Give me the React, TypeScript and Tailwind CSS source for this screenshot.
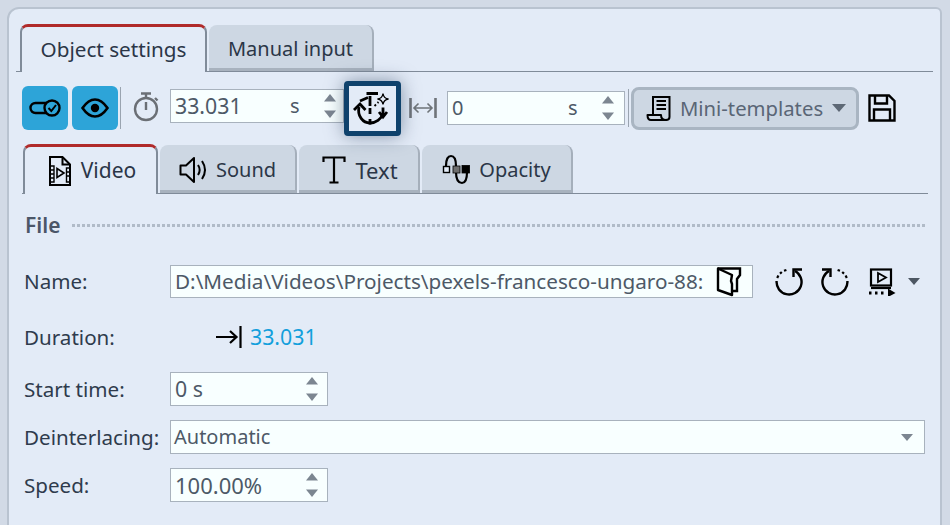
const font = "[font-family:'Noto_Sans','Open_Sans',sans-serif]";

function Spinner() {
  return (
    <svg width="14" height="26" viewBox="0 0 14 26" className="shrink-0">
      <path d="M7 1 L13 8.5 H1 Z" fill="#7c8691" />
      <path d="M1 17.5 H13 L7 25 Z" fill="#7c8691" />
    </svg>
  );
}

function Caret({ fill = "#5d6875", w = 14, h = 8 }: { fill?: string; w?: number; h?: number }) {
  return (
    <svg width={w} height={h} viewBox="0 0 14 8" preserveAspectRatio="none" className="shrink-0">
      <path d="M0 0 H14 L7 8 Z" fill={fill} />
    </svg>
  );
}

function ToggleIcon() {
  return (
    <svg width="32" height="20" viewBox="0 0 32 20" fill="none" stroke="#000" strokeWidth="2.4">
      <rect x="1.5" y="5" width="22" height="10" rx="5" />
      <circle cx="23" cy="10" r="7.5" fill="#2da4d8" />
      <path d="M19.5 10 L22.3 13 L27 7" strokeWidth="2" />
    </svg>
  );
}

function EyeIcon() {
  return (
    <svg width="28" height="20" viewBox="0 0 28 20" fill="none" stroke="#000" strokeWidth="2.6">
      <path d="M1.5 10 C6 3.5 10 1.5 14 1.5 C18 1.5 22 3.5 26.5 10 C22 16.5 18 18.5 14 18.5 C10 18.5 6 16.5 1.5 10 Z" />
      <circle cx="14" cy="10" r="4.2" fill="#000" stroke="none" />
    </svg>
  );
}

function TimerIcon() {
  return (
    <svg width="26" height="30" viewBox="0 0 26 30" fill="none" stroke="#6b6f75" strokeWidth="2.4" className="shrink-0">
      <circle cx="13" cy="17" r="11" />
      <path d="M8 1.5 H18 M13 2 V6 M13 10 V18 M22 6 L24.5 8.5" />
    </svg>
  );
}

function MagicTimerIcon() {
  return (
    <svg width="45" height="45" viewBox="0 0 45 45" fill="none" stroke="#000" strokeWidth="2.8">
      <path d="M9 21 C7 30 13 37 20 37 C26 37 31 33 33 28" />
      <path d="M4 24 L10 18 L15.5 24" />
      <path d="M20 33 V38.5" />
      <path d="M20 10 V20 M20 22 V28" />
      <path d="M16.5 7.5 H28 M10 15 L18 11.5" />
      <path d="M33 7.5 C33.5 11 35 12.5 38.5 13 C35 13.5 33.5 15 33 18.5 C32.5 15 31 13.5 27.5 13 C31 12.5 32.5 11 33 7.5 Z" strokeWidth="1.3" />
      <path d="M24.5 20 L26 18.5 M27.5 17 L28.5 16" strokeWidth="1.8" />
      <path d="M33 21.5 V31 M29 26 L33 31 L37 26" />
    </svg>
  );
}

function FitIcon() {
  return (
    <svg width="28" height="20" viewBox="0 0 28 20" fill="none" stroke="#6f7479" strokeWidth="2.6" className="shrink-0">
      <path d="M1.5 0 V20 M26.5 0 V20" />
      <path d="M5 10 H23 M9.5 5.5 L5 10 L9.5 14.5 M18.5 5.5 L23 10 L18.5 14.5" strokeWidth="1.6" />
    </svg>
  );
}

function ScrollIcon() {
  return (
    <svg width="25" height="26" viewBox="0 0 25 26" fill="none" stroke="#000" strokeWidth="2" className="shrink-0">
      <path d="M7 19 V2 H23.5 V22 C23.5 24 22 25 20 25" />
      <path d="M10.5 6 H20 M10.5 10 H20 M10.5 14 H20" strokeWidth="1.9" />
      <path d="M1.5 20 H15 C15 23 17 25 20 25 H5 C3 25 1.5 23 1.5 20 Z" strokeLinejoin="round" />
    </svg>
  );
}

function SaveIcon() {
  return (
    <svg width="28" height="28" viewBox="0 0 28 28" fill="none" stroke="#000" strokeWidth="2.4" className="shrink-0">
      <path d="M1.5 1.5 H21 L26.5 7 V26.5 H1.5 Z" />
      <path d="M7 2 V9.5 H19 V2 M6 26 V15.5 H22 V26" />
    </svg>
  );
}

function VideoFileIcon() {
  return (
    <svg width="22" height="30" viewBox="0 0 22 30" fill="none" stroke="#000" strokeWidth="2" className="shrink-0">
      <path d="M1 1 H13.5 L21 8.5 V29 H1 Z" />
      <path d="M13.5 1 V8.5 H21" />
      <path d="M8 12.5 L15 17 L8 21.5 Z" strokeWidth="1.6" />
      <path d="M1 10 H5 V26 H1 M1 14 H5 M1 18 H5 M1 22 H5 M21 12 H17.5 V26 H21 M21 16 H17.5 M21 20 H17.5" strokeWidth="1.4" />
    </svg>
  );
}

function SoundIcon() {
  return (
    <svg width="28" height="28" viewBox="0 0 28 28" fill="none" stroke="#000" strokeWidth="2" className="shrink-0">
      <path d="M1.5 9.5 H7 L15 2 V26 L7 18.5 H1.5 Z" strokeLinejoin="round" />
      <path d="M19 9 C21 12 21 16 19 19 M23 5 C27 11 27 17 23 23" />
    </svg>
  );
}

function TextIcon() {
  return (
    <svg width="24" height="28" viewBox="0 0 24 28" fill="none" stroke="#000" strokeWidth="2.2" className="shrink-0">
      <path d="M1.5 6 V1.5 H22.5 V6 M12 1.5 V26.5 M7.5 26.5 H16.5" />
    </svg>
  );
}

function OpacityIcon() {
  return (
    <svg width="28" height="32" viewBox="0 0 28 32" fill="none" stroke="#000" strokeWidth="2.2" className="shrink-0">
      <path d="M4 12 C4 5 6 2 9 2 C12 2 14 5 14 12 M14 18 C14 26 17 29 20 29 C23 29 25 25 25 18" />
      <rect x="1.5" y="12.5" width="6" height="6" fill="#e3ebf7" strokeWidth="1.4" />
      <rect x="11" y="12" width="7" height="7" fill="#6e6e6e" strokeWidth="0.8" />
      <rect x="20" y="11.5" width="7.5" height="7.5" fill="#000" strokeWidth="0.8" />
    </svg>
  );
}

function FolderIcon() {
  return (
    <svg width="26" height="30" viewBox="0 0 26 30" fill="none" stroke="#000" strokeWidth="2.4" className="shrink-0">
      <path d="M2 1.5 H24 V8 L21 12 V24 H17" />
      <path d="M2 1.5 L16 8 L15 14 L16 17 V28 L2 23 Z" strokeLinejoin="round" />
    </svg>
  );
}

function RotateLeftIcon() {
  return (
    <svg width="28" height="28" viewBox="0 0 28 28" fill="none" stroke="#000" strokeWidth="2.4" className="shrink-0">
      <path d="M20 3 A12.5 12.5 0 1 1 1.6 13" />
      <path d="M2.2 10 L3.4 7.6 M5 5.6 L6.8 4 M9 2.8 L11.4 2" strokeWidth="2.2" />
      <path d="M27 1.5 H18.5 V9" />
    </svg>
  );
}

function RotateRightIcon() {
  return (
    <svg width="28" height="28" viewBox="0 0 28 28" fill="none" stroke="#000" strokeWidth="2.4" className="shrink-0">
      <path d="M8 3 A12.5 12.5 0 1 0 26.4 13" />
      <path d="M25.8 10 L24.6 7.6 M23 5.6 L21.2 4 M19 2.8 L16.6 2" strokeWidth="2.2" />
      <path d="M1 1.5 H9.5 V9" />
    </svg>
  );
}

function PreviewIcon() {
  return (
    <svg width="28" height="28" viewBox="0 0 28 28" fill="none" stroke="#000" strokeWidth="2.2" className="shrink-0">
      <rect x="3" y="1.5" width="20" height="16" />
      <path d="M3 20 H23" />
      <path d="M10 5 L18 9.5 L10 14 Z" strokeWidth="1.8" />
      <path d="M1 25 H3.5 M7 25 H9.5 M13 25 H15.5" strokeWidth="2.8" />
      <path d="M20 20.5 L27.5 25 L20 29 Z" fill="#000" stroke="none" />
    </svg>
  );
}

function DurationIcon() {
  return (
    <svg width="26" height="22" viewBox="0 0 26 22" fill="none" stroke="#000" strokeWidth="2.2" className="shrink-0">
      <path d="M0 11 H20 M14 5 L20.5 11 L14 17" />
      <path d="M24.5 0 V22" />
    </svg>
  );
}

function Tab({ active, icon, label, w, size = "" }: { active?: boolean; icon?: React.ReactNode; label: string; w: string; size?: string }) {
  return (
    <div
      className={
        active
          ? `${w} -mb-px flex items-center justify-center gap-[10px] rounded-t-[8px] border-x-2 border-t-[3px] border-x-[#808b99] border-t-[#b02a2a] bg-[#e3ebf7] text-[#2b3647]`
          : `${w} mt-[1px] flex items-center justify-center gap-[9px] rounded-t-[8px] border-r-2 border-b-[3px] border-r-[#a5afbb] border-b-[#a8b2be] bg-[#cdd7e3] pt-[5px] text-[#2b3647]`
      }
    >
      {icon}
      <span className={size}>{label}</span>
    </div>
  );
}

function Field({ w, h, className, children }: { w: string; h: string; className?: string; children: React.ReactNode }) {
  return (
    <div className={`${w} ${h} ${className ?? ""} relative flex shrink-0 items-center border border-[#a8b2bd] bg-[#f8ffff] pl-[3px] text-[#4d5967]`}>
      {children}
    </div>
  );
}

function Row({ label, mt, children }: { label: string; mt: string; children: React.ReactNode }) {
  return (
    <div className={`${mt} flex items-center pl-2`}>
      <div className="w-[146px] shrink-0 text-[20.6px] text-[#2f3b4d]">{label}</div>
      {children}
    </div>
  );
}

export default function App() {
  return (
    <div className={`${font} h-[525px] w-[950px] overflow-hidden bg-[#d2dae6] pt-[7px] pl-[7px] pr-2 text-[20px] leading-none`}>
      <div className="h-[530px] rounded-tl-[12px] rounded-tr-[6px] border-2 border-[#b9c3d0] bg-[#e3ebf7] px-[7px] pt-[15px]">
        <div className="flex h-[48px] gap-[2px] border-b border-[#808b99] pl-1">
          <Tab active label="Object settings" w="w-[187px]" size="text-[20.7px]" />
          <Tab label="Manual input" w="w-[165px]" />
        </div>

        <div className="mt-[6px] flex h-[60px] items-center pl-[6px]">
          <div className="flex h-[44px] w-[46px] items-center justify-center rounded-[6px] bg-[#2da4d8]">
            <ToggleIcon />
          </div>
          <div className="ml-1 flex h-[44px] w-[46px] items-center justify-center rounded-[6px] bg-[#2da4d8]">
            <EyeIcon />
          </div>
          <div className="ml-[2px] h-[42px] w-px bg-[#9aa4b0]" />
          <div className="ml-3 mb-[3px]">
            <TimerIcon />
          </div>
          <Field w="w-[174px]" h="h-[34px]" className="mb-[5px] ml-[11px]">
            <span className="w-[116px] pl-[1px] text-[21.3px]">33.031</span>
            <span>s</span>
            <span className="absolute right-[6px] top-[3px] flex"><Spinner /></span>
          </Field>
          <div className="z-10 flex h-[55px] w-[57px] shrink-0 items-center justify-center rounded-[4px] border-[5px] border-[#0f426c] bg-[#e3ebf7] shadow-[0_0_18px_rgba(40,60,90,0.5)]">
            <MagicTimerIcon />
          </div>
          <div className="ml-2">
            <FitIcon />
          </div>
          <Field w="w-[178px]" h="h-[34px]" className="ml-[10px]">
            <span className="w-[117px] pl-[1px]">0</span>
            <span>s</span>
            <span className="absolute right-[9px] top-[3px] flex"><Spinner /></span>
          </Field>
          <div className="ml-[3px] h-[38px] w-px bg-[#9aa4b0]" />
          <div className="ml-[2px] flex h-[43px] w-[228px] items-center justify-center gap-[9px] rounded-[8px] border-[3px] border-[#a9b5c2] bg-[#cdd7e3] pl-[2px] text-[20.3px] text-[#5a6676]">
            <ScrollIcon />
            <span>Mini-templates</span>
            <Caret />
          </div>
          <div className="ml-[9px]">
            <SaveIcon />
          </div>
        </div>

        <div className="mt-[6px] ml-[6px] flex h-[50px] w-[906px] gap-[2px] border-b border-[#808b99] pl-px">
          <Tab active icon={<VideoFileIcon />} label="Video" w="w-[135px] pl-[4px]" size="text-[21px]" />
          <Tab icon={<SoundIcon />} label="Sound" w="w-[137px]" />
          <Tab icon={<TextIcon />} label="Text" w="w-[121px] pl-[3px]" size="text-[22px]" />
          <Tab icon={<OpacityIcon />} label="Opacity" w="w-[151px]" />
        </div>

        <div className="mt-5 flex h-[22px] items-center gap-3 pl-[9px] pr-2">
          <span className="text-[21px] font-semibold text-[#4b5668]">File</span>
          <div className="h-[3px] flex-1 bg-[repeating-linear-gradient(90deg,#b1bbc8_0,#b1bbc8_3px,transparent_3px,transparent_5px)]" />
        </div>

        <Row label="Name:" mt="mt-[29px]">
          <Field w="w-[583px]" h="h-[33px]">
            <span className="whitespace-nowrap pl-[1px] text-[20.7px]">D:\Media\Videos\Projects\pexels-francesco-ungaro-88:</span>
            <span className="absolute right-[10px] top-px flex"><FolderIcon /></span>
          </Field>
          <div className="ml-[22px]"><RotateLeftIcon /></div>
          <div className="ml-[18px]"><RotateRightIcon /></div>
          <div className="ml-[19px]"><PreviewIcon /></div>
          <div className="ml-3"><Caret fill="#4d5763" w={12} h={7} /></div>
        </Row>

        <Row label="Duration:" mt="mt-[27px]">
          <div className="ml-[46px] flex h-[24px] items-center gap-2 text-[21.3px] text-[#129fdc]">
            <DurationIcon />
            <span>33.031</span>
          </div>
        </Row>

        <Row label="Start time:" mt="mt-[23px]">
          <Field w="w-[158px]" h="h-[34px]">
            <span className="pl-[1px] text-[21.3px]">0 s</span>
            <span className="absolute right-2 top-[3px] flex"><Spinner /></span>
          </Field>
        </Row>

        <Row label="Deinterlacing:" mt="mt-[14px]">
          <Field w="w-[755px]" h="h-[34px]">
            <span>Automatic</span>
            <span className="absolute right-[11px] top-[13px] flex"><Caret fill="#7c8691" w={12} h={7} /></span>
          </Field>
        </Row>

        <Row label="Speed:" mt="mt-[14px]">
          <Field w="w-[158px]" h="h-[34px]">
            <span className="pl-[1px] text-[22px]">100.00%</span>
            <span className="absolute right-2 top-[3px] flex"><Spinner /></span>
          </Field>
        </Row>
      </div>
    </div>
  );
}
